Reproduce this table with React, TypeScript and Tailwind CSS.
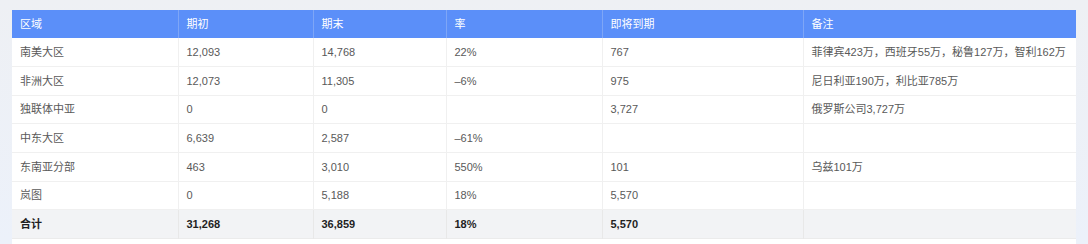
import React from "react";

const cols = [
  { key: "region", title: "区域", w: "w-[166px]" },
  { key: "start", title: "期初", w: "w-[135px]" },
  { key: "end", title: "期末", w: "w-[133px]" },
  { key: "rate", title: "率", w: "w-[156px]" },
  { key: "due", title: "即将到期", w: "w-[201px]" },
  { key: "note", title: "备注", w: "w-[273px]" },
];

const rows = [
  ["南美大区", "12,093", "14,768", "22%", "767", "菲律宾423万，西班牙55万，秘鲁127万，智利162万"],
  ["非洲大区", "12,073", "11,305", "–6%", "975", "尼日利亚190万，利比亚785万"],
  ["独联体中亚", "0", "0", "", "3,727", "俄罗斯公司3,727万"],
  ["中东大区", "6,639", "2,587", "–61%", "", ""],
  ["东南亚分部", "463", "3,010", "550%", "101", "乌兹101万"],
  ["岚图", "0", "5,188", "18%", "5,570", ""],
];

const total = ["合计", "31,268", "36,859", "18%", "5,570", ""];

export default function App() {
  return (
    <div
      className="h-[244px] w-full overflow-hidden bg-gradient-to-b from-[#eef0f4] to-[#ecf1fa] px-[12px] pt-[10px]"
      style={{ fontFamily: '"Liberation Sans", "Noto Sans CJK SC", sans-serif' }}
    >
      <div className="h-[260px] w-[1064px] bg-white">
        <table className="w-[1064px] table-fixed border-collapse text-[11px]">
          <colgroup>
            {cols.map((c) => (
              <col key={c.key} className={c.w} />
            ))}
          </colgroup>
          <thead>
            <tr className="h-[28px] bg-[#5b8ff9]">
              {cols.map((c, i) => (
                <th
                  key={c.key}
                  className={`px-[8px] text-left font-normal text-white ${
                    i > 0 ? "border-l border-[#7ea6f7]" : ""
                  }`}
                >
                  {c.title}
                </th>
              ))}
            </tr>
          </thead>
          <tbody>
            {rows.map((r, ri) => (
              <tr key={ri} className="h-[28.67px] border-b border-[#f0f0f0]">
                {r.map((v, i) => (
                  <td
                    key={i}
                    className={`px-[8px] text-[#595959] whitespace-nowrap ${
                      i > 0 ? "border-l border-[#f0f0f0]" : ""
                    }`}
                  >
                    {v}
                  </td>
                ))}
              </tr>
            ))}
            <tr className="h-[28.67px] bg-[#f2f3f5] border-b border-[#ebebeb]">
              {total.map((v, i) => (
                <td
                  key={i}
                  className={`px-[8px] font-bold text-[#1f1f1f] ${
                    i > 0 ? "border-l border-[#e8e8e8]" : ""
                  }`}
                >
                  {v}
                </td>
              ))}
            </tr>
          </tbody>
        </table>
      </div>
    </div>
  );
}
